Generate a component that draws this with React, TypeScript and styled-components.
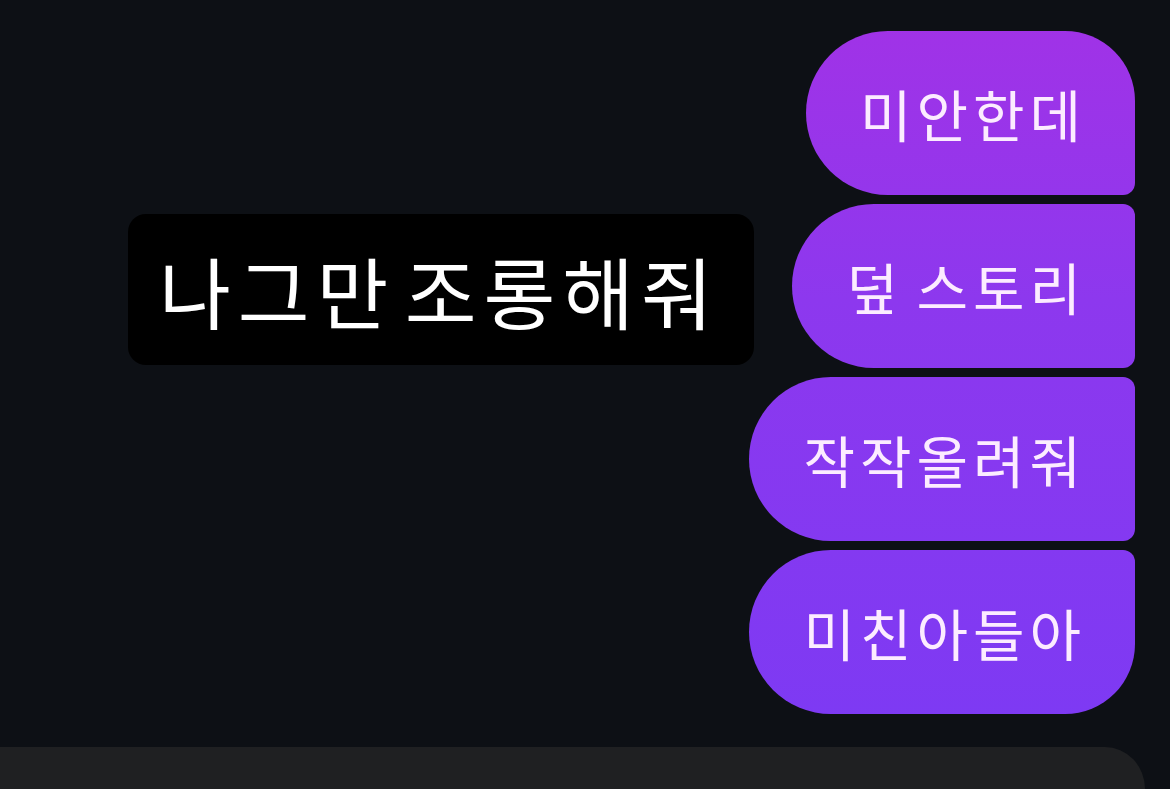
import React from "react";
import styled, { createGlobalStyle } from "styled-components";

const GlobalStyle = createGlobalStyle`
    html, body {
        margin: 0;
        padding: 0;
        background: #0d1015;
    }
    body {
        font-family: "Noto Sans CJK KR", "Noto Sans", sans-serif;
    }
`;

const Screen = styled.div`
    position: relative;
    width: 1170px;
    height: 789px;
    overflow: hidden;
    display: flex;
    flex-direction: column;
    background: #0d1015;
`;

const Thread = styled.div`
    flex: 1;
    display: flex;
    flex-direction: column;
    align-items: flex-end;
    gap: 9px;
    padding: 31px 35px 0 0;
`;

type Pos = "first" | "middle" | "last";

const Bubble = styled.div<{ $pos: Pos }>`
    height: 164px;
    box-sizing: border-box;
    display: flex;
    align-items: center;
    padding: 0 49px 0 54px;
    border-radius: ${({ $pos }) =>
        $pos === "first"
            ? "82px 70px 12px 82px"
            : $pos === "last"
            ? "82px 12px 70px 82px"
            : "82px 12px 12px 82px"};
    background: linear-gradient(180deg, #a232e6 0px, #8d38ee 300px, #7b3af4 789px);
    background-attachment: fixed;
    color: #fcecff;
    font-size: 56px;
    letter-spacing: 5px;
    word-spacing: -4px;
    line-height: 1;
    font-weight: 400;
    white-space: nowrap;
`;

// story text sticker laid over the chat
const Sticker = styled.div`
    position: absolute;
    left: 128px;
    top: 214px;
    height: 151px;
    box-sizing: border-box;
    display: flex;
    align-items: center;
    padding: 0 34px 0 31px;
    border-radius: 18px;
    background: #000;
    color: #fff;
    font-size: 78px;
    letter-spacing: 7px;
    word-spacing: -15px;
    line-height: 1;
    white-space: nowrap;
`;

const Composer = styled.div`
    height: 42px;
    margin-right: 25px;
    background: #1f2022;
    border-top-right-radius: 110px 115px;
`;

const messages: { text: string; pos: Pos }[] = [
    { text: "미안한데", pos: "first" },
    { text: "덮 스토리", pos: "middle" },
    { text: "작작올려줘", pos: "middle" },
    { text: "미친아들아", pos: "last" },
];

export default function App() {
    return (
        <>
            <GlobalStyle />
            <Screen>
                <Thread>
                    {messages.map((m) => (
                        <Bubble key={m.text} $pos={m.pos}>
                            {m.text}
                        </Bubble>
                    ))}
                </Thread>
                <Composer />
                <Sticker>나그만 조롱해줘</Sticker>
            </Screen>
        </>
    );
}
